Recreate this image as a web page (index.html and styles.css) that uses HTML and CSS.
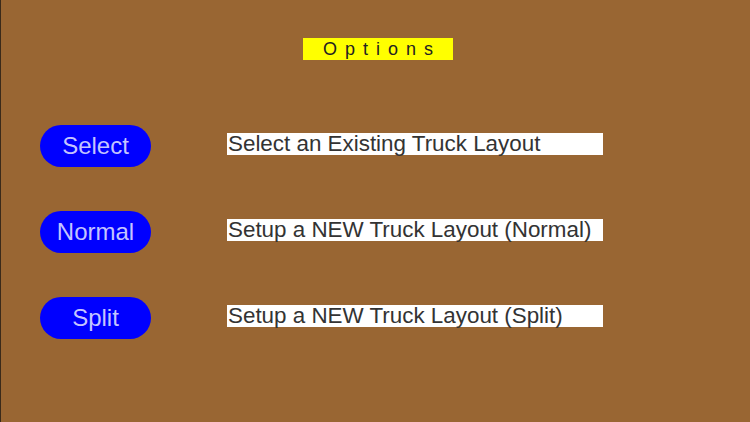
FILE: index.html
```html
<!DOCTYPE html>
<html>
<head>
<meta charset="utf-8">
<link rel="stylesheet" href="styles.css">
</head>
<body>
<div class="screen">
  <div class="title-wrap"><div class="title">Options</div></div>
  <div class="rows">
    <div class="row">
      <div class="btn">Select</div>
      <div class="field">Select an Existing Truck Layout</div>
    </div>
    <div class="row">
      <div class="btn">Normal</div>
      <div class="field">Setup a NEW Truck Layout (Normal)</div>
    </div>
    <div class="row">
      <div class="btn">Split</div>
      <div class="field">Setup a NEW Truck Layout (Split)</div>
    </div>
  </div>
</div>
</body>
</html>
```
FILE: styles.css
```css
html, body {
  margin: 0;
  padding: 0;
}
body {
  width: 750px;
  height: 422px;
  overflow: hidden;
  background: #996633;
  font-family: "Liberation Sans", Arial, sans-serif;
}
.screen {
  box-sizing: border-box;
  width: 750px;
  height: 422px;
  border-left: 1px solid #3a2a1a;
  padding-top: 38px;
}
.title-wrap {
  display: flex;
  justify-content: flex-start;
  padding-left: 302px;
}
.title {
  width: 150px;
  height: 22px;
  background: #ffff00;
  color: #222;
  font-size: 18px;
  line-height: 22px;
  letter-spacing: 8px;
  text-align: center;
  text-indent: 8px;
}
.rows {
  display: flex;
  flex-direction: column;
  gap: 44px;
  padding-top: 65px;
  padding-left: 39px;
}
.row {
  display: flex;
  align-items: center;
  height: 42px;
}
.btn {
  width: 111px;
  height: 42px;
  border-radius: 21px;
  background: #0000ff;
  color: #c4c4ff;
  font-size: 24px;
  line-height: 42px;
  text-align: center;
}
.field {
  margin-left: 76px;
  width: 376px;
  height: 22px;
  background: #ffffff;
  color: #333;
  font-size: 22.4px;
  line-height: 22px;
  padding-left: 1px;
  box-sizing: border-box;
  margin-top: -4px;
  white-space: nowrap;
}
```
